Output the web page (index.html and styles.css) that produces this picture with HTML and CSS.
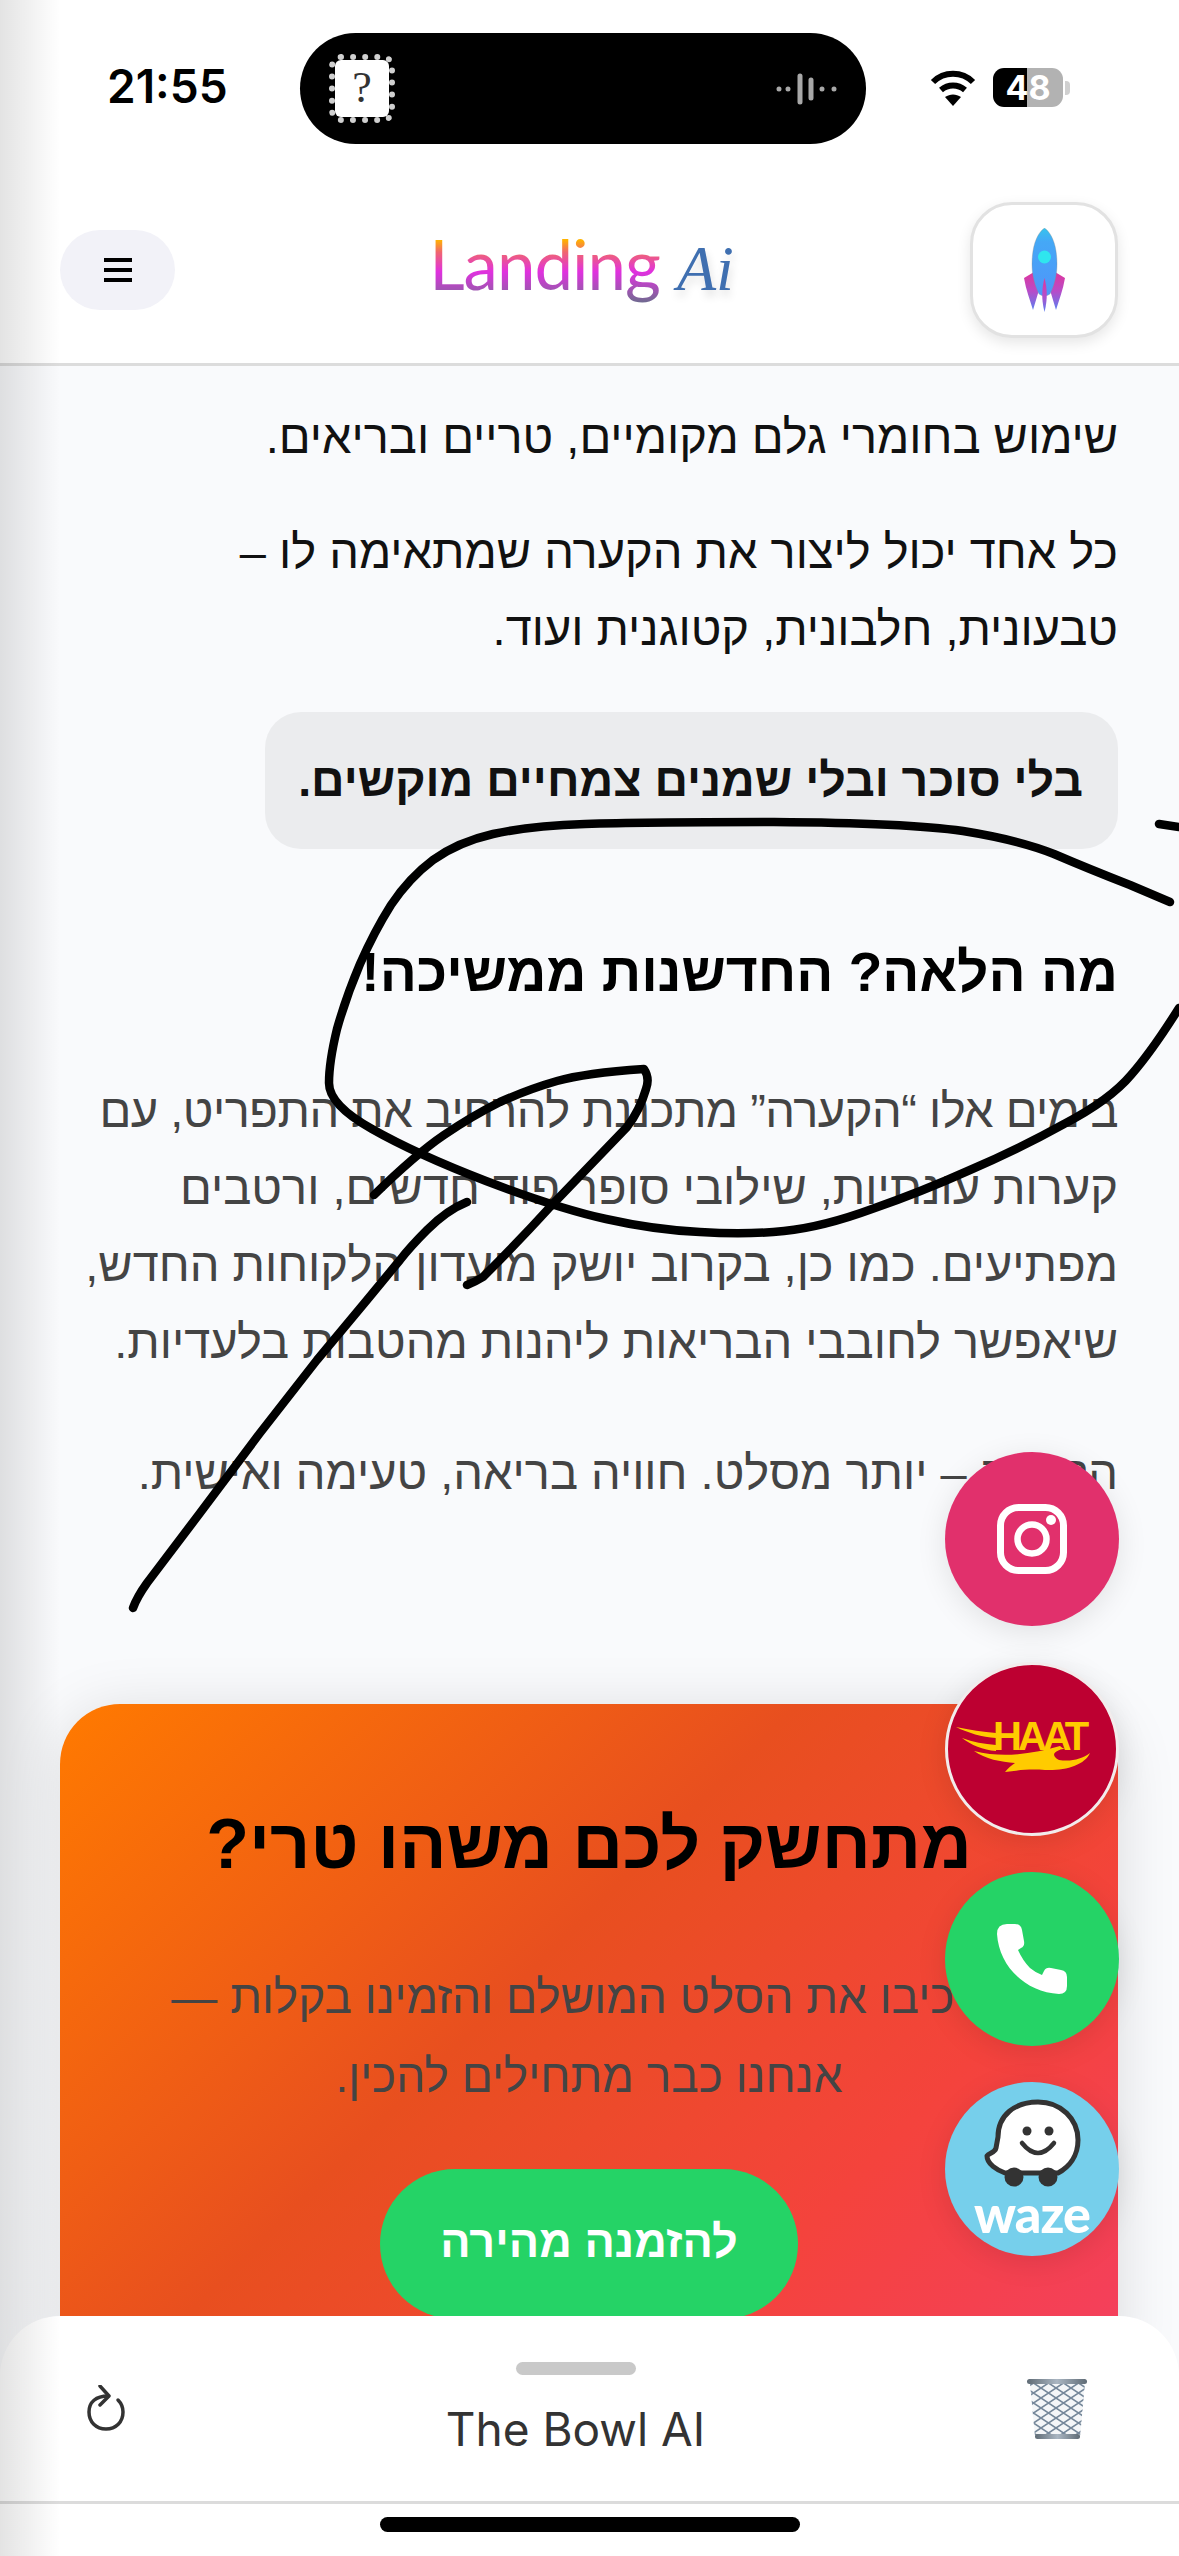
FILE: index.html
```html
<!DOCTYPE html>
<html lang="he" dir="rtl">
<head>
    <meta charset="UTF-8">
    <meta name="viewport" content="width=device-width, initial-scale=1.0">
    <title>The Bowl AI</title>
    <link rel="stylesheet" href="styles.css">
</head>
<body>
    <div class="edge-shade"></div>

    <header class="top" dir="ltr">
        <div class="status">
            <span class="time">21:55</span>
            <div class="island">
                <div class="album">?</div>
                <svg class="wave" viewBox="0 0 62 32">
                    <g stroke="#a8a8a8" stroke-linecap="round" stroke-width="5" fill="none">
                        <path d="M3 16v.1M12 16v.1M24 3v26M35 7v18M46 16v.1M58 16v.1"/>
                    </g>
                </svg>
            </div>
            <div class="status-right">
                <svg class="wifi" viewBox="0 0 46 36">
                    <path d="M3 12C14 1 32 1 43 12" fill="none" stroke="#000" stroke-width="6"/>
                    <path d="M11 20c7-6 17-6 24 0" fill="none" stroke="#000" stroke-width="6"/>
                    <path d="M23 36l-8-9c5-3.500 11-3.500 16 0z" fill="#000"/>
                </svg>
                <div class="battery"><span>48</span></div>
                <div class="battery-tip"></div>
            </div>
        </div>
        <nav class="nav">
            <button class="menu-btn">
                <span></span><span></span><span></span>
            </button>
            <div class="logo"><span class="logo-main">Landing</span><span class="logo-ai">Ai</span></div>
            <div class="rocket-btn">
                <svg viewBox="0 0 41 84" width="41" height="84">
                    <defs>
                        <linearGradient id="fin" x1="0" y1="0" x2="0" y2="1">
                            <stop offset="0" stop-color="#e0359c"/>
                            <stop offset="0.5" stop-color="#b84cc8"/>
                            <stop offset="1" stop-color="#5c7ff0"/>
                        </linearGradient>
                        <linearGradient id="hull" x1="0" y1="0" x2="0" y2="1">
                            <stop offset="0" stop-color="#35c4ee"/>
                            <stop offset="0.2" stop-color="#45a8f6"/>
                            <stop offset="1" stop-color="#4f95fa"/>
                        </linearGradient>
                    </defs>
                    <path d="M0 50L10 44L15 62L9 82C6 72 2 62 0 50Z" fill="url(#fin)"/>
                    <path d="M41 50L31 44L26 62L32 82C35 72 39 62 41 50Z" fill="url(#fin)"/>
                    <path d="M20.500 0C29 6 33 20 33 36C33 48 30 58 26 66Q20.500 70 15 66C11 58 8 48 8 36C8 20 12 6 20.500 0Z" fill="url(#hull)" stroke="#8c8c8c" stroke-opacity="0.4" stroke-width="0.8"/>
                    <path d="M20.500 50C23 60 24 70 20.500 84C17 70 18 60 20.500 50Z" fill="url(#fin)"/>
                    <circle cx="20.500" cy="29" r="6.500" fill="#2fe6ee"/>
                </svg>
            </div>
        </nav>
    </header>

    <main class="content">
        <p class="text dark first">שימוש בחומרי גלם מקומיים, טריים ובריאים.</p>
        <p class="text dark">כל אחד יכול ליצור את הקערה שמתאימה לו –<br>טבעונית, חלבונית, קטוגנית ועוד.</p>
        <div class="callout">בלי סוכר ובלי שמנים צמחיים מוקשים.</div>
        <h2 class="next-title">מה הלאה? החדשנות ממשיכה!</h2>
        <p class="text muted"><span class="tight">בימים אלו “הקערה” מתכננת להרחיב את התפריט, עם</span><br>קערות עונתיות, שילובי סופר פוד חדשים, ורטבים<br>מפתיעים. כמו כן, בקרוב יושק מועדון הלקוחות החדש,<br>שיאפשר לחובבי הבריאות ליהנות מהטבות בלעדיות.</p>
        <p class="text muted">הקערה – יותר מסלט. חוויה בריאה, טעימה ואישית.</p>

        <section class="cta">
            <h2>מתחשק לכם משהו טרי?</h2>
            <p>הרכיבו את הסלט המושלם והזמינו בקלות —<br>אנחנו כבר מתחילים להכין.</p>
            <a class="cta-btn">להזמנה מהירה</a>
        </section>
    </main>

    <svg class="ink" viewBox="0 0 1179 2556" fill="none" stroke="#000" stroke-width="8.500" stroke-linecap="round" stroke-linejoin="round">
        <path d="M1170 902L1130 885Q1089 869 1054 854Q1019 840 963 831Q907 823 774 822Q641 822 585 824Q529 826 493 834Q458 842 433 860Q409 878 391 905Q374 932 360 964Q346 997 337 1029Q329 1062 329 1083Q329 1105 372 1129Q416 1154 486 1181Q557 1208 606 1219Q655 1230 700 1232Q746 1235 784 1231Q823 1227 872 1209Q921 1192 970 1170Q1019 1149 1064 1124Q1110 1100 1131 1075Q1152 1051 1179 1008"/>
        <path d="M1159 824L1179 827"/>
        <path d="M374 1195Q416 1154 444 1135Q472 1116 500 1102Q529 1089 557 1081Q585 1073 644 1069Q650 1078 646 1089Q640 1110 627 1127L550 1207Q520 1240 483 1277Q475 1282 467 1285"/>
        <path d="M467 1202Q447 1210 427 1230Q410 1247 400 1260L367 1300L317 1360L260 1433L200 1513L147 1583Q137 1597 133 1608"/>
    </svg>

    <div class="float-btns" dir="ltr">
        <a class="float-btn insta">
            <svg viewBox="0 0 70 70" width="70" height="70">
                <rect x="3.500" y="3.500" width="63" height="63" rx="18" fill="none" stroke="#fff" stroke-width="7"/>
                <circle cx="35" cy="35" r="14.500" fill="none" stroke="#fff" stroke-width="6.500"/>
                <circle cx="54" cy="16" r="5" fill="#fff"/>
            </svg>
        </a>
        <a class="float-btn haat">
            <span class="haat-text">HAAT</span>
            <svg class="haat-wing" viewBox="0 0 136 50" width="136" height="50">
                <g fill="#ffcb00">
                    <path d="M1 4C15 7 28 9 41 10V15C27 14 13 10 1 4Z"/>
                    <path d="M7 15C18 19 29 21 41 22V28C28 27 16 22 7 15Z"/>
                    <path d="M19 28C50 36 80 30 105 23C108 26 112 27 115 25C100 26 94 32 104 37C116 39 127 36 135 30C130 42 110 48 90 47C75 46 65 47 50 49C53 45 57 42 60 40C46 39 30 36 19 28Z"/>
                </g>
            </svg>
        </a>
        <a class="float-btn phone">
            <svg viewBox="0 0 70 70" width="70" height="70">
                <path fill="#fff" d="M10 0H18Q24 0 25 6L27 17Q28 22 24 24L21 26Q26 37 33 44Q39 49 45 51L47 47Q49 43 54 44L64 46Q70 47 70 53V62Q70 70 62 70C28 68 2 42 0 10Q0 0 10 0Z"/>
            </svg>
        </a>
        <a class="float-btn waze">
            <svg class="waze-ghost" viewBox="0 0 174 174" width="174" height="174">
                <path d="M53 55C53 33 70 20 93 20C116 20 133 37 133 58C133 74 124 85 113 91H60C52 88 42 82 42 74C44 71 50 71 51 66Z" fill="#fff" stroke="#333" stroke-width="5" stroke-linejoin="round"/>
                <circle cx="82" cy="49" r="4.500" fill="#333"/>
                <circle cx="104" cy="49" r="4.500" fill="#333"/>
                <path d="M77 61Q93 81 109 61" fill="none" stroke="#333" stroke-width="4.500" stroke-linecap="round"/>
                <circle cx="69" cy="95" r="9.500" fill="#333"/>
                <circle cx="103" cy="95" r="9.500" fill="#333"/>
            </svg>
            <span class="waze-text">waze</span>
        </a>
    </div>

    <footer class="sheet" dir="ltr">
        <div class="sheet-row">
            <svg class="refresh" viewBox="0 0 38 46" width="38" height="46" fill="none" stroke="#333" stroke-width="3.500" stroke-linecap="round" stroke-linejoin="round">
                <path d="M21 11C9 11 2 17 2 27C2 37 9 44 19 44C29 44 36 37 36 27C36 22 34 18 31 15"/>
                <path d="M13 1L22 11L13 20"/>
            </svg>
            <div class="sheet-mid">
                <div class="handle"></div>
                <div class="sheet-title">The Bowl AI</div>
            </div>
            <svg class="trash" viewBox="0 0 62 64" width="62" height="64">
                <defs>
                    <pattern id="mesh" width="15" height="10" patternUnits="userSpaceOnUse">
                        <path d="M0 0L15 10M15 0L0 10" stroke="#75879a" stroke-width="1.600"/>
                    </pattern>
                    <linearGradient id="rim" x1="0" y1="0" x2="1" y2="0">
                        <stop offset="0" stop-color="#5f6b75"/>
                        <stop offset="0.5" stop-color="#aab6c2"/>
                        <stop offset="1" stop-color="#5f6b75"/>
                    </linearGradient>
                </defs>
                <path d="M4 5L9 59H54L59 5Z" fill="#f4f6f8"/>
                <path d="M4 5L9 59H54L59 5Z" fill="url(#mesh)"/>
                <rect x="1" y="1" width="60" height="5" rx="2.500" fill="url(#rim)"/>
                <rect x="9" y="56" width="45" height="5" rx="2.500" fill="url(#rim)"/>
            </svg>
        </div>
        <div class="sheet-foot">
            <div class="home-bar"></div>
        </div>
    </footer>
</body>
</html>
```

FILE: styles.css
```css
* {
    box-sizing: border-box;
}

body {
    margin: 0;
    width: 1179px;
    height: 2556px;
    overflow: hidden;
    position: relative;
    display: flex;
    flex-direction: column;
    font-family: "Liberation Sans", sans-serif;
    background-color: #f9fafc;
}

.edge-shade {
    position: absolute;
    top: 0;
    left: 0;
    bottom: 0;
    width: 60px;
    background: linear-gradient(to right, rgba(0, 0, 0, 0.11), rgba(0, 0, 0, 0));
    z-index: 5;
    pointer-events: none;
}

/* top: status bar and nav */
.top {
    height: 366px;
    flex-shrink: 0;
    background-color: white;
    border-bottom: 3px solid #dcdcdc;
}

.status {
    height: 177px;
    padding: 33px 0 0 107px;
    display: flex;
    align-items: flex-start;
}

.time {
    width: 193px;
    margin-top: 24px;
    font-family: Inter, sans-serif;
    font-size: 46px;
    font-weight: 600;
    line-height: 58px;
    color: #000;
}

.island {
    width: 566px;
    height: 111px;
    border-radius: 56px;
    background-color: #000;
    display: flex;
    align-items: center;
    justify-content: space-between;
    padding: 0 28px 0 29px;
}

.album {
    width: 66px;
    height: 69px;
    border-radius: 12px;
    background-color: white;
    background-clip: padding-box;
    border: 6px dotted #d0d0d0;
    color: #333;
    font-family: "Liberation Serif", serif;
    font-size: 44px;
    line-height: 56px;
    text-align: center;
}

.wave {
    width: 62px;
    height: 32px;
}

.status-right {
    margin-left: 64px;
    margin-top: 35px;
    display: flex;
    align-items: center;
}

.wifi {
    width: 46px;
    height: 36px;
    margin-right: 17px;
}

.battery {
    width: 70px;
    height: 39px;
    border-radius: 11px;
    background: linear-gradient(to right, #000 48%, #b2b2b2 48%);
    color: white;
    font-family: Inter, sans-serif;
    font-size: 34px;
    font-weight: 700;
    line-height: 39px;
    text-align: center;
}

.battery-tip {
    width: 5px;
    height: 14px;
    margin-left: 2px;
    border-radius: 0 4px 4px 0;
    background-color: #d0d0d0;
}

.nav {
    height: 186px;
    padding: 25px 61px 0 60px;
    display: flex;
    align-items: flex-start;
    justify-content: space-between;
}

.menu-btn {
    width: 115px;
    height: 80px;
    margin-top: 28px;
    padding: 0;
    border: none;
    border-radius: 40px;
    background-color: #f2f2f8;
    display: flex;
    flex-direction: column;
    align-items: center;
    justify-content: center;
    gap: 6px;
}

.menu-btn span {
    display: block;
    width: 28px;
    height: 4px;
    background-color: #000;
}

.logo {
    margin-top: 22px;
    margin-left: 18px;
    display: flex;
    align-items: baseline;
    gap: 17px;
}

.logo-main {
    font-family: Lato, sans-serif;
    font-size: 69px;
    font-weight: 400;
    line-height: 80px;
    letter-spacing: -1px;
    background: linear-gradient(to bottom, #ffb300 20%, #f0666e 35%, #e030e0 60%, #a850b8 80%, #6f6a90 98%);
    -webkit-background-clip: text;
    background-clip: text;
    color: transparent;
}

.logo-ai {
    font-family: "Liberation Serif", serif;
    font-style: italic;
    font-size: 64px;
    color: #3f6fb0;
    text-shadow: 2px 6px 8px rgba(0, 0, 0, 0.12);
}

.rocket-btn {
    width: 148px;
    height: 136px;
    border: 3px solid #e2e2e2;
    border-radius: 42px;
    background-color: white;
    box-shadow: 0 5px 14px rgba(0, 0, 0, 0.1);
    display: flex;
    align-items: center;
    justify-content: center;
}

/* article */
.content {
    flex: 1;
    padding: 0 61px 0 60px;
}

.text {
    margin: 0 0 38px;
    font-size: 47px;
    line-height: 77px;
}

.first {
    margin-top: 32px;
}

.dark {
    color: #111;
}

.muted {
    margin-bottom: 54px;
    color: #444;
}

.tight {
    letter-spacing: -0.5px;
}

.callout {
    width: 853px;
    height: 137px;
    margin-top: 45px;
    padding: 0 35px;
    border-radius: 36px;
    background-color: #ebecee;
    color: #111;
    font-size: 46.5px;
    font-weight: 700;
    line-height: 137px;
    white-space: nowrap;
}

.next-title {
    margin: 84px 0 61px;
    color: #000;
    font-size: 55px;
    font-weight: 700;
    line-height: 78px;
}

.cta {
    margin-top: 193px;
    height: 700px;
    padding-top: 90px;
    border-radius: 60px;
    background: linear-gradient(135deg, #ff7a00 0%, #e84f1f 42%, #f4433c 72%, #f43f62 100%);
    box-shadow: 0 8px 60px rgba(0, 0, 0, 0.13);
    text-align: center;
}

.cta h2 {
    margin: 0 0 64px;
    color: #000;
    font-size: 70px;
    font-weight: 700;
    line-height: 100px;
}

.cta p {
    margin: 0 0 53px;
    color: #444;
    font-size: 46px;
    line-height: 79px;
}

.cta-btn {
    display: inline-block;
    width: 418px;
    height: 150px;
    border-radius: 75px;
    background-color: #25d366;
    color: white;
    font-size: 45px;
    font-weight: 700;
    line-height: 146px;
}

/* freehand mark over the page */
.ink {
    position: absolute;
    top: 0;
    left: 0;
    width: 1179px;
    height: 2556px;
    z-index: 2;
    pointer-events: none;
}

/* floating contact buttons */
.float-btns {
    position: absolute;
    top: 1452px;
    right: 60px;
    display: flex;
    flex-direction: column;
    gap: 36px;
    z-index: 3;
}

.float-btn {
    position: relative;
    width: 174px;
    height: 174px;
    border-radius: 50%;
    display: flex;
    align-items: center;
    justify-content: center;
    box-shadow: 0 6px 30px rgba(0, 0, 0, 0.1);
}

.insta {
    background-color: #e1306c;
}

.haat {
    background-color: #bd0031;
    border: 3px solid #f2ecec;
}

.haat-text {
    position: absolute;
    top: 51px;
    left: 45px;
    color: #ffcb00;
    font-family: "Liberation Sans", sans-serif;
    font-size: 40px;
    font-weight: 700;
    line-height: 40px;
    letter-spacing: -4px;
}

.haat-wing {
    position: absolute;
    top: 58px;
    left: 7px;
}

.phone {
    background-color: #25d366;
}

.waze {
    background-color: #76cfeb;
}

.waze-ghost {
    position: absolute;
    top: 0;
    left: 0;
}

.waze-text {
    position: absolute;
    top: 101px;
    left: 0;
    width: 174px;
    color: white;
    font-family: Lato, sans-serif;
    font-size: 52px;
    font-weight: 900;
    line-height: 60px;
    text-align: center;
    letter-spacing: -1px;
}

/* bottom sheet */
.sheet {
    position: absolute;
    left: 0;
    right: 0;
    bottom: 0;
    height: 240px;
    border-radius: 60px 60px 0 0;
    background-color: white;
    z-index: 4;
}

.sheet-row {
    height: 188px;
    padding: 0 91px 0 87px;
    border-bottom: 3px solid #dcdcdc;
    display: flex;
    justify-content: space-between;
    align-items: flex-start;
}

.refresh {
    margin-top: 69px;
}

.sheet-mid {
    margin-top: 46px;
    display: flex;
    flex-direction: column;
    align-items: center;
}

.handle {
    width: 120px;
    height: 13px;
    border-radius: 7px;
    background-color: #c9c9c9;
}

.sheet-title {
    margin-top: 24px;
    color: #333;
    font-family: Inter, sans-serif;
    font-size: 46px;
    line-height: 60px;
}

.trash {
    margin-top: 62px;
}

.sheet-foot {
    display: flex;
    justify-content: center;
    padding-top: 13px;
}

.home-bar {
    width: 420px;
    height: 15px;
    border-radius: 8px;
    background-color: #000;
}
```
